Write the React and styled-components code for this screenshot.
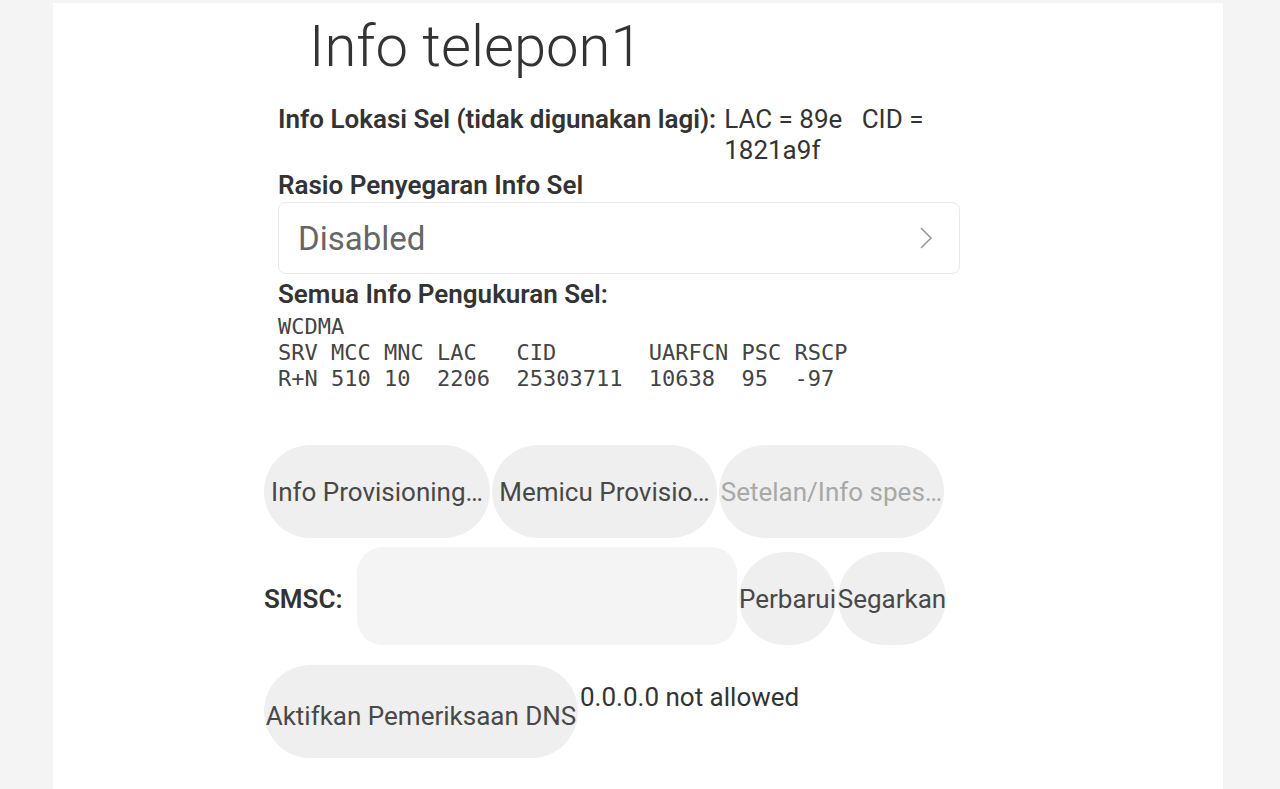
import React from "react";
import styled, { createGlobalStyle } from "styled-components";

const GlobalStyle = createGlobalStyle`
  html, body {
    margin: 0;
    padding: 0;
    background: #f4f4f4;
    font-family: Roboto, "Noto Sans", sans-serif;
    color: #333;
  }
`;

const Panel = styled.div`
  margin: 3px 0 0 53px;
  width: 1170px;
  min-height: 786px;
  background: #fff;
`;

const Column = styled.div`
  margin-left: 211px;
  width: 696px;
  display: flex;
  flex-direction: column;
`;

const Title = styled.h1`
  margin: 0;
  padding: 3px 0 0 45px;
  font-size: 58px;
  font-weight: 300;
  line-height: 80px;
  color: #333;
`;

const Info = styled.div`
  padding: 18px 0 0 14px;
  display: flex;
  flex-direction: column;
`;

const InfoRow = styled.div`
  display: flex;
  gap: 8px;
  font-size: 26px;
  line-height: 31px;
`;

const Label = styled.div`
  font-weight: 600;
  font-size: 26px;
  line-height: 31px;
  color: #333;
  white-space: nowrap;
`;

const Value = styled.div`
  flex: 1;
  white-space: pre-wrap;
  color: #333;
`;

const Section = styled.div`
  margin-top: ${(p) => p.$top || 0}px;
`;

const Select = styled.div`
  margin-top: 1px;
  height: 72px;
  box-sizing: border-box;
  border: 1px solid #e9e9e9;
  border-radius: 8px;
  padding: 0 26px 0 19px;
  display: flex;
  align-items: center;
  justify-content: space-between;
  font-size: 33px;
  color: #666;
`;

const Mono = styled.pre`
  margin: 4px 0 0;
  font-family: "DejaVu Sans Mono", "Liberation Mono", monospace;
  font-size: 22px;
  line-height: 26px;
  color: #444;
`;

const ButtonRow = styled.div`
  display: flex;
  align-items: ${(p) => p.$align || "center"};
  gap: 2px;
  margin-top: ${(p) => p.$top || 0}px;
`;

const PillButton = styled.button`
  flex: none;
  width: ${(p) => p.$w}px;
  height: 93px;
  border: none;
  border-radius: 47px;
  background: #efefef;
  padding: ${(p) => p.$drop || 0}px 0 0;
  font-family: Roboto, "Noto Sans", sans-serif;
  font-size: 26px;
  color: ${(p) => (p.$disabled ? "#a8a8a8" : "#484848")};
  white-space: nowrap;
  display: flex;
  align-items: center;
  justify-content: center;
`;

const SmscLabel = styled(Label)`
  width: 91px;
  flex: none;
  align-self: center;
  padding-top: 6px;
`;

const SmscInput = styled.div`
  width: 380px;
  height: 98px;
  border-radius: 26px;
  background: #f4f4f4;
  flex: none;
`;

const DnsStatus = styled.div`
  align-self: flex-start;
  margin-top: 17px;
  font-size: 26px;
  color: #333;
`;

const Chevron = () => (
  <svg width="14" height="24" viewBox="0 0 14 24" fill="none">
    <path d="M2 2l10 10L2 22" stroke="#999" strokeWidth="1.6" />
  </svg>
);

export default function App() {
  return (
    <>
      <GlobalStyle />
      <Panel>
        <Column>
          <Title>Info telepon1</Title>
          <Info>
            <InfoRow>
              <Label>Info Lokasi Sel (tidak digunakan lagi):</Label>
              <Value>{"LAC = 89e   CID =\n1821a9f"}</Value>
            </InfoRow>
            <Section $top={4}>
              <Label>Rasio Penyegaran Info Sel</Label>
              <Select>
                <span>Disabled</span>
                <Chevron />
              </Select>
            </Section>
            <Section $top={5}>
              <Label>Semua Info Pengukuran Sel:</Label>
              <Mono>
                {"WCDMA\nSRV MCC MNC LAC   CID       UARFCN PSC RSCP\nR+N 510 10  2206  25303711  10638  95  -97"}
              </Mono>
            </Section>
          </Info>
          <ButtonRow $top={53}>
            <PillButton $w={226}>Info Provisioning…</PillButton>
            <PillButton $w={225}>Memicu Provisio…</PillButton>
            <PillButton $w={225} $disabled>
              Setelan/Info spes…
            </PillButton>
          </ButtonRow>
          <ButtonRow $top={9} $align="flex-end">
            <SmscLabel>SMSC:</SmscLabel>
            <SmscInput />
            <PillButton $w={97}>Perbarui</PillButton>
            <PillButton $w={108}>Segarkan</PillButton>
          </ButtonRow>
          <ButtonRow $top={20}>
            <PillButton $w={314} $drop={8}>
              Aktifkan Pemeriksaan DNS
            </PillButton>
            <DnsStatus>0.0.0.0 not allowed</DnsStatus>
          </ButtonRow>
        </Column>
      </Panel>
    </>
  );
}
